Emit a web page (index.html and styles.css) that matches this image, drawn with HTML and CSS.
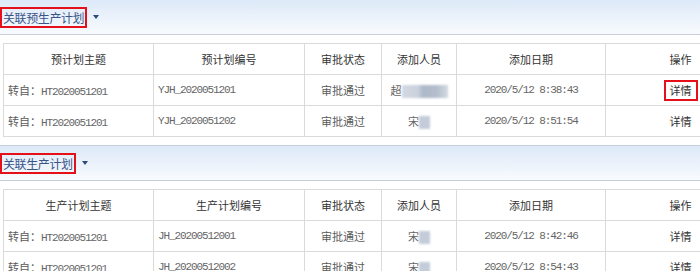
FILE: index.html
```html
<!DOCTYPE html>
<html lang="zh-CN">
<head>
<meta charset="utf-8">
<title>关联计划</title>
<link rel="stylesheet" href="styles.css">
</head>
<body>
<section class="panel">
  <div class="bar"><span class="title">关联预生产计划</span><span class="caret"></span></div>
  <table class="grid">
    <colgroup><col class="c1"><col class="c2"><col class="c3"><col class="c4"><col class="c5"><col class="c6"></colgroup>
    <thead>
      <tr><th>预计划主题</th><th>预计划编号</th><th>审批状态</th><th>添加人员</th><th>添加日期</th><th>操作</th></tr>
    </thead>
    <tbody>
      <tr><td class="l">转自：<span class="m">HT2020051201</span></td><td class="l m">YJH_2020051201</td><td>审批通过</td><td><span class="name">超</span><span class="blur wide"></span></td><td class="m">2020/5/12 8:38:43</td><td><span class="act mark">详情</span></td></tr>
      <tr><td class="l">转自：<span class="m">HT2020051201</span></td><td class="l m">YJH_2020051202</td><td>审批通过</td><td><span class="name">宋</span><span class="blur"></span></td><td class="m">2020/5/12 8:51:54</td><td><span class="act">详情</span></td></tr>
    </tbody>
  </table>
</section>
<section class="panel">
  <div class="bar"><span class="title">关联生产计划</span><span class="caret"></span></div>
  <table class="grid">
    <colgroup><col class="c1"><col class="c2"><col class="c3"><col class="c4"><col class="c5"><col class="c6"></colgroup>
    <thead>
      <tr><th>生产计划主题</th><th>生产计划编号</th><th>审批状态</th><th>添加人员</th><th>添加日期</th><th>操作</th></tr>
    </thead>
    <tbody>
      <tr><td class="l">转自：<span class="m">HT2020051201</span></td><td class="l m">JH_20200512001</td><td>审批通过</td><td><span class="name">宋</span><span class="blur"></span></td><td class="m">2020/5/12 8:42:46</td><td><span class="act">详情</span></td></tr>
      <tr><td class="l">转自：<span class="m">HT2020051201</span></td><td class="l m">JH_20200512002</td><td>审批通过</td><td><span class="name">宋</span><span class="blur"></span></td><td class="m">2020/5/12 8:54:43</td><td><span class="act">详情</span></td></tr>
    </tbody>
  </table>
</section>
</body>
</html>
```
FILE: styles.css
```css
html, body {
  margin: 0;
  padding: 0;
  overflow: hidden;
  background: #fff;
}
body {
  font-family: "Noto Sans CJK SC", "Noto Sans", sans-serif;
  font-size: 11px;
  color: #5a5a5a;
}
.panel + .panel {
  margin-top: 8px;
}
.bar {
  height: 34px;
  display: flex;
  align-items: center;
  border-bottom: 1px solid #c8ced6;
  background: linear-gradient(#dde9f8, #f8fbfe);
}
.panel + .panel .bar {
  border-top: 1px solid #c8ced6;
}
.title {
  border: 2px solid #e5101a;
  padding: 0 1px;
  line-height: 17px;
  font-size: 12px;
  letter-spacing: -0.4px;
  color: #3a5688;
}
.caret {
  width: 0;
  height: 0;
  margin-left: 6px;
  border-left: 3.5px solid transparent;
  border-right: 3.5px solid transparent;
  border-top: 4px solid #2c4a78;
}
.grid {
  margin: 8px 0 0 3px;
  border-collapse: collapse;
  table-layout: fixed;
  width: 752px;
  border: 1px solid #cfcfcf;
}
.c1 { width: 150px; }
.c2 { width: 151px; }
.c3 { width: 77px; }
.c4 { width: 75px; }
.c5 { width: 149px; }
.c6 { width: 150px; }
th, td {
  height: 30px;
  padding: 0 4px;
  border: 1px solid #dadada;
  text-align: center;
  white-space: nowrap;
  overflow: hidden;
}
th {
  font-weight: normal;
  color: #333;
}
td.l {
  text-align: left;
}
.m {
  font-family: "Liberation Mono", monospace;
  font-size: 11px;
  letter-spacing: -1.1px;
  color: #666;
}
.name {
  color: #666;
}
.blur {
  display: inline-block;
  width: 11px;
  height: 13px;
  vertical-align: middle;
  background: #c3ccd8;
  filter: blur(1px);
}
.blur.wide {
  width: 46px;
  background: linear-gradient(90deg, #d3d9e1 0%, #c9d1dc 35%, #aeb9c9 45%, #b3bdcc 75%, #d4dae2 100%);
}
.act {
  display: inline-block;
  color: #333;
  line-height: 15px;
  padding: 1px 4px;
  border: 2px solid transparent;
}
.act.mark {
  border-color: #e5101a;
}
```
